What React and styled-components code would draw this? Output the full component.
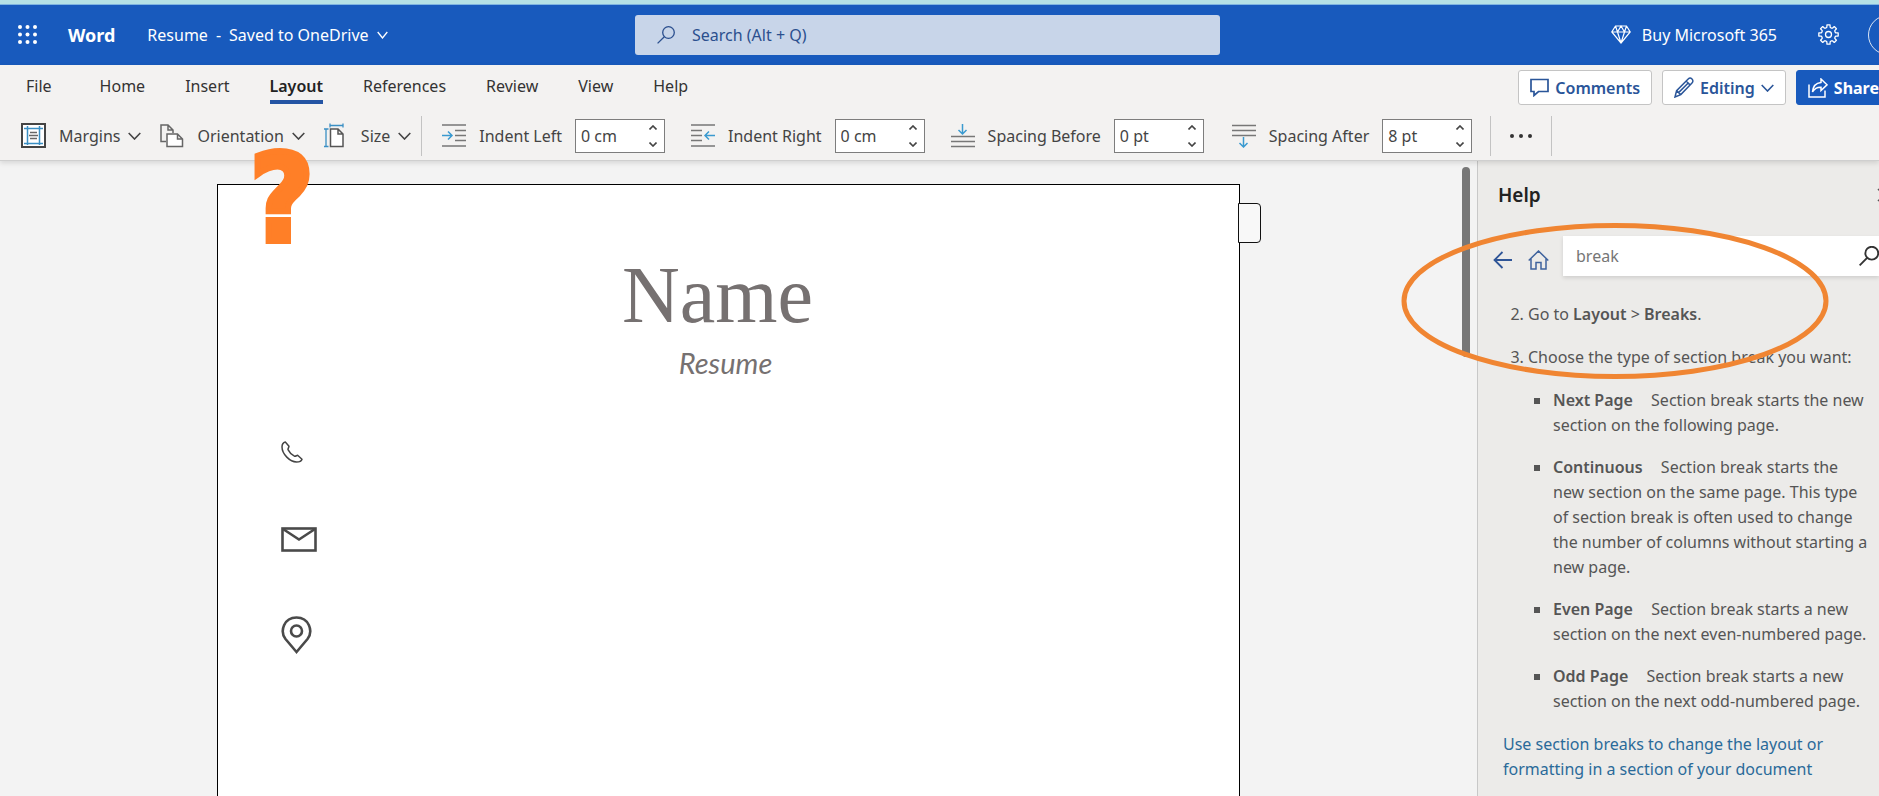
import React from "react";
import styled, { createGlobalStyle } from "styled-components";

const GlobalStyle = createGlobalStyle`
  * { box-sizing: border-box; }
  html, body { margin: 0; }
  body, button, input { font-family: "Noto Sans", "Open Sans", sans-serif; }
  button { background: none; border: 0; padding: 0; color: inherit; cursor: pointer; }
  svg { display: block; flex: none; }
`;

const Shell = styled.div`
  display: flex;
  flex-direction: column;
  height: 100vh;
  overflow: hidden;
  background: #f3f3f3;
  font-size: 16px;
  color: #444;
`;

/* ---- Title bar ---- */
const TitleBar = styled.header`
  flex: none;
  display: grid;
  grid-template-columns: minmax(0, 1fr) 585px 659px;
  align-items: center;
  height: 65px;
  border-top: 4px solid #b5e1e6;
  background: #185abd;
  box-shadow: inset 0 1px 0 #7fb4e0;
  color: #fff;
`;

const TitleLeft = styled.div`
  display: flex;
  align-items: center;
  padding-left: 18px;
  white-space: nowrap;
`;

const AppName = styled.span`
  margin-left: 30px;
  font-size: 18px;
  font-weight: 700;
`;

const DocName = styled.button`
  display: flex;
  align-items: center;
  gap: 8px;
  margin-left: 32px;
  font-size: 16px;
`;

const SearchBox = styled.label`
  display: flex;
  align-items: center;
  gap: 15px;
  height: 40px;
  padding-left: 22px;
  border-radius: 3px;
  background: #c8d5e9;
  color: #2b4f8e;
`;

const SearchInput = styled.input`
  flex: 1;
  min-width: 0;
  border: 0;
  outline: 0;
  background: none;
  font-size: 16px;
  color: inherit;
  &::placeholder { color: inherit; opacity: 1; }
`;

const TitleRight = styled.div`
  display: flex;
  align-items: center;
  justify-content: flex-end;
`;

const BuyButton = styled.button`
  display: flex;
  align-items: center;
  gap: 11px;
  font-size: 16px;
  white-space: nowrap;
`;

const IconButton = styled.button`
  display: flex;
  flex: none;
  margin-left: ${(p) => p.$gap || 0}px;
`;

const Avatar = styled.button`
  flex: none;
  width: 40px;
  height: 40px;
  margin: 0 -29px 0 29px;
  border: 1px solid #dbe6f6;
  border-radius: 50%;
`;

/* ---- Ribbon ---- */
const Ribbon = styled.div`
  flex: none;
  position: relative;
  z-index: 1;
  height: 96px;
  background: #f3f2f1;
  border-bottom: 1px solid #cfcfcf;
  box-shadow: 0 2px 5px rgba(0, 0, 0, 0.12);
`;

const TabRow = styled.div`
  display: flex;
  justify-content: space-between;
  height: 46px;
  overflow: hidden;
`;

const Tabs = styled.nav`
  display: flex;
  align-items: flex-start;
  gap: 40px;
  padding: 7px 0 0 26px;
`;

const Tab = styled.button`
  height: 32px;
  margin-right: ${(p) => (p.$wide ? 8 : 0)}px;
  border-bottom: 4px solid ${(p) => (p.$active ? "#2455a4" : "transparent")};
  font-size: 16px;
  font-weight: ${(p) => (p.$active ? 600 : 400)};
  line-height: 28px;
  color: ${(p) => (p.$active ? "#222" : "#333")};
`;

const Actions = styled.div`
  display: flex;
  gap: 10px;
  margin-right: -12px;
  padding-top: 5px;
`;

const ActionButton = styled.button`
  display: flex;
  align-items: center;
  gap: 6px;
  height: 35px;
  padding: 0 11px;
  border: 1px solid ${(p) => (p.$primary ? "#185abd" : "#c4c4c4")};
  border-radius: 3px;
  background: ${(p) => (p.$primary ? "#185abd" : "#fff")};
  font-size: 16px;
  font-weight: ${(p) => (p.$primary ? 700 : 600)};
  color: ${(p) => (p.$primary ? "#fff" : "#2a5599")};
`;

const Tools = styled.div`
  display: flex;
  align-items: center;
  height: 50px;
  padding: 0 0 1px 21px;
  font-size: 16px;
  white-space: nowrap;
`;

const ToolButton = styled.button`
  display: flex;
  align-items: center;
  gap: 8px;
  margin-right: ${(p) => p.$after}px;
  font-size: 16px;
  svg:first-child { margin-right: 5px; }
`;

const Divider = styled.span`
  width: 1px;
  height: 40px;
  margin-left: ${(p) => p.$before || 0}px;
  background: #c3c3c3;
`;

const Field = styled.label`
  display: flex;
  align-items: center;
  gap: 13px;
  margin-left: ${(p) => p.$before}px;
`;

const Spinner = styled.span`
  display: flex;
  width: 90px;
  height: 34px;
  border: 1px solid #7d7d7d;
  background: #fff;
`;

const SpinnerInput = styled.input`
  width: 73px;
  border: 0;
  outline: 0;
  padding: 0 0 0 5px;
  background: none;
  font-size: 16px;
  color: #444;
`;

const SpinnerArrows = styled.span`
  display: flex;
  flex-direction: column;
  justify-content: center;
  gap: 12px;
`;

const MoreButton = styled.button`
  display: flex;
  align-items: center;
  justify-content: center;
  width: 60px;
  height: 40px;
`;

/* ---- Document ---- */
const Body = styled.div`
  flex: 1;
  display: flex;
  min-height: 0;
`;

const Workspace = styled.main`
  flex: 1;
  display: flex;
  justify-content: center;
  min-width: 0;
  padding-top: 23px;
`;

const Sheet = styled.article`
  position: relative;
  width: 1023px;
  padding: 64px 0 0 62px;
  border: 1px solid #000;
  border-bottom: 0;
  background: #fff;
`;

const SideTab = styled.span`
  position: absolute;
  top: 18px;
  right: -22px;
  width: 23px;
  height: 40px;
  border: 1px solid #111;
  border-radius: 0 4px 4px 0;
  background: #f8f8f8;
`;

const Mark = styled.span`
  position: absolute;
  z-index: 2;
  top: -34px;
  left: 32px;
  font-family: "DejaVu Sans Condensed", "DejaVu Sans", sans-serif;
  font-size: 122px;
  font-weight: 700;
  line-height: 96px;
  color: #ff7f27;
  -webkit-text-stroke: 6px #ff7f27;
`;

const Name = styled.h1`
  margin: 0;
  padding-right: 84px;
  font-family: "Liberation Serif", serif;
  font-size: 80px;
  font-weight: 400;
  line-height: 92px;
  text-align: center;
  color: #767171;
`;

const Subtitle = styled.p`
  margin: 0;
  padding: 2px 68px 0 0;
  font-family: Lato, sans-serif;
  font-size: 29px;
  font-style: italic;
  line-height: 40px;
  text-align: center;
  color: #767171;
`;

const Contacts = styled.div`
  display: flex;
  flex-direction: column;
  align-items: flex-start;
  gap: 64px;
  padding: 58px 0 0 1px;
`;

const ScrollTrack = styled.div`
  flex: none;
  width: 20px;
  padding: 6px 7px 0 5px;
`;

const ScrollThumb = styled.div`
  height: 190px;
  border-radius: 4px;
  background: #777;
`;

/* ---- Help pane ---- */
const HelpPane = styled.aside`
  flex: none;
  position: relative;
  width: 402px;
  border-left: 1px solid #c8c8c8;
  background: #ecebe9;
  color: #555;
`;

const PaneHead = styled.div`
  display: flex;
  align-items: center;
  justify-content: space-between;
  height: 75px;
  margin-right: -12px;
  padding: 0 0 8px 20px;
`;

const PaneTitle = styled.h2`
  margin: 0;
  font-size: 19px;
  font-weight: 600;
  color: #222;
`;

const PaneNav = styled.div`
  display: flex;
  align-items: center;
  padding-left: 15px;
  > button { padding-top: 8px; }
`;

const PaneSearch = styled.label`
  flex: 1;
  display: flex;
  align-items: center;
  min-width: 0;
  height: 40px;
  margin-left: 14px;
  padding-left: 11px;
  background: #fff;
  box-shadow: 0 2px 4px rgba(0, 0, 0, 0.12);
  color: #333;
`;

const PaneInput = styled(SearchInput)`
  color: #767676;
`;

const Steps = styled.ol`
  margin: 0;
  padding: 26px 0 0 50px;
  font-size: 16px;
  line-height: 25px;
  white-space: nowrap;
  > li { margin-bottom: 18px; }
`;

const Kinds = styled.ul`
  margin: 18px 0 0;
  padding: 0 0 0 25px;
  list-style: none;
`;

const Kind = styled.li`
  position: relative;
  margin-bottom: 17px;
  b { margin-right: 14px; }
  &::before {
    content: "";
    position: absolute;
    top: 10px;
    left: -19px;
    width: 6px;
    height: 6px;
    background: #555;
  }
`;

const Bold = styled.b`
  font-weight: 600;
`;

const PaneLink = styled.a`
  display: block;
  padding-left: 25px;
  font-size: 16px;
  line-height: 25px;
  color: #2a6a99;
  text-decoration: none;
`;

const Ring = styled.svg`
  position: absolute;
  top: 61px;
  left: -77px;
  pointer-events: none;
`;

/* ---- Icons ---- */
const Icon = ({ w, h, stroke = "currentColor", sw = 1.5, children }) => (
  <svg width={w} height={h} viewBox={`0 0 ${w} ${h}`} fill="none" stroke={stroke} strokeWidth={sw} aria-hidden="true">
    {children}
  </svg>
);

const Chevron = ({ w = 13, sw = 1.6 }) => (
  <Icon w={w} h={8} sw={sw}><path d={`M0.7 1 L${w / 2} 7 L${w - 0.7} 1`} /></Icon>
);

const Waffle = () => (
  <svg width="20" height="20" viewBox="0 0 20 20" fill="#fff" aria-hidden="true">
    {[2, 9.5, 17].map((y) => [2, 9.5, 17].map((x) => <circle key={`${x}-${y}`} cx={x} cy={y} r="2" />))}
  </svg>
);

const Magnifier = ({ size = 18, sw = 1.3 }) => (
  <svg width={size} height={size} viewBox="0 0 18 18" fill="none" stroke="currentColor" strokeWidth={sw} aria-hidden="true">
    <circle cx="11.5" cy="6.5" r="5.8" /><path d="M7.3 10.7 L0.6 17.4" />
  </svg>
);

const Diamond = () => (
  <Icon w={20} h={19} sw={1.2}>
    <path d="M4.5 1 H15.5 L19.2 7 L10 18 L0.8 7 Z M0.8 7 H19.2 M6.5 7 L10 18 L13.5 7 L10 1 Z M4.5 1 L6.5 7 M15.5 1 L13.5 7" />
  </Icon>
);

const gearPath = Array.from({ length: 8 }, (_, i) => {
  const pt = (deg, r) => {
    const a = ((i * 45 + deg) * Math.PI) / 180;
    return `${(10.5 + r * Math.sin(a)).toFixed(2)} ${(10.5 - r * Math.cos(a)).toFixed(2)}`;
  };
  return `${i ? "L" : "M"}${pt(-13, 7.4)} L${pt(-9, 9.8)} L${pt(9, 9.8)} L${pt(13, 7.4)} L${pt(22.5, 7)}`;
}).join(" ") + " Z";

const Gear = () => (
  <Icon w={21} h={21} sw={1.3}><path d={gearPath} strokeLinejoin="round" /><circle cx="10.5" cy="10.5" r="3" /></Icon>
);

const CommentIcon = () => (
  <Icon w={19} h={19} sw={1.7}><path d="M1 1.5 H18 V13.5 H8.5 L4 17.5 V13.5 H1 Z" /></Icon>
);

const PencilIcon = () => (
  <Icon w={20} h={21} sw={1.5}>
    <path d="M1 20 L2.6 13.6 L14.2 2 C15.2 1 16.8 0.8 18 2 C19.2 3.2 19.2 4.8 18 6 L6.8 17.6 Z M2.6 13.6 L6.8 17.6 M12.2 4 L16.2 8 M4.6 15.6 L14.2 6" />
  </Icon>
);

const ShareIcon = () => (
  <Icon w={20} h={20} sw={1.5}>
    <path d="M1 6.5 V19 H17 V12.5" />
    <path d="M13 1 L19 6.8 L13 12.5 V9.2 C9 9 6.5 10.5 4.5 14 C5 8 8 4.8 13 4.4 Z" />
  </Icon>
);

const MarginsIcon = () => (
  <Icon w={25} h={25}>
    <rect x="1" y="1" width="23" height="23" stroke="#444" strokeWidth="2" fill="#fff" />
    <path d="M6.5 3 V22 M18.5 3 V22 M3 5.5 H22 M3 20.5 H22" stroke="#3a8fc4" />
    <path d="M9 9.5 H16 M8 12.5 H17 M9 15.5 H16" stroke="#666" strokeWidth="1.3" />
  </Icon>
);

const OrientationIcon = () => (
  <Icon w={24} h={24} stroke="#666">
    <path d="M6 17.5 H1 V1 H8 L13 6 V9 M8 1 V6 H13" />
    <path d="M7 10 H17.5 L22.5 15 V22.5 H7 Z M17.5 10 V15 H22.5" fill="#fff" />
  </Icon>
);

const SizeIcon = () => (
  <Icon w={24} h={25}>
    <path d="M6 2.5 H19 M6 0.5 V4.5 M19 0.5 V4.5 M2 6 V23.5 M0 6 H4.5 M0 23.5 H4.5" stroke="#3a8fc4" strokeWidth="1.3" />
    <path d="M6.5 6 H14 L19 11 V23.5 H6.5 Z M14 6 V11 H19" stroke="#555" fill="#fff" />
  </Icon>
);

const IndentLeftIcon = () => (
  <Icon w={24} h={23} stroke="#777">
    <path d="M0 1 H24 M13 6.5 H24 M13 11.5 H24 M13 16.5 H24 M0 22 H24" />
    <path d="M0 11.5 H10 M6 7.5 L10 11.5 L6 15.5" stroke="#3a9ad0" />
  </Icon>
);

const IndentRightIcon = () => (
  <Icon w={24} h={23} stroke="#777">
    <path d="M0 1 H24 M0 6.5 H11 M0 11.5 H11 M0 16.5 H11 M0 22 H24" />
    <path d="M24 11.5 H14 M18 7.5 L14 11.5 L18 15.5" stroke="#3a9ad0" />
  </Icon>
);

const SpacingBeforeIcon = () => (
  <Icon w={24} h={24} stroke="#777">
    <path d="M0 12.5 H24 M0 17.5 H24 M0 22.5 H24" strokeWidth="1.7" />
    <path d="M11.5 0 V10 M7.5 6 L11.5 10 L15.5 6" stroke="#3a9ad0" />
  </Icon>
);

const SpacingAfterIcon = () => (
  <Icon w={24} h={24} stroke="#777">
    <path d="M0 1.5 H24 M0 6.5 H24 M0 11.5 H24" strokeWidth="1.7" />
    <path d="M11.5 13 V23 M7.5 19 L11.5 23 L15.5 19" stroke="#3a9ad0" />
  </Icon>
);

const PhoneIcon = () => (
  <Icon w={22} h={22} stroke="#444">
    <path strokeLinejoin="round" d="M4.3 1 C3 1.3 1 3 1 6 C1 13 9 21 15.5 21 C18.5 21 20.6 19.5 21 18.2 L16.6 14.3 C15.4 14.6 14.8 15.4 13.4 15.2 C11 14 8.2 11 7 8.6 C7 7.2 7.8 6.8 8 5.2 Z" />
  </Icon>
);

const MailIcon = () => (
  <Icon w={36} h={25} stroke="#4a4a4a" sw={2.6}>
    <rect x="1.5" y="1.5" width="33" height="22" /><path d="M2 2 L18 12.5 L34 2" />
  </Icon>
);

const PinIcon = () => (
  <Icon w={31} h={38} stroke="#4a4a4a" sw={2.6}>
    <path d="M15.5 36 L4.5 23 C-1.5 15 3 1.5 15.5 1.5 C28 1.5 32.5 15 26.5 23 Z" /><circle cx="15.5" cy="15" r="5.5" />
  </Icon>
);

const fields = [
  { label: "Indent Left", value: "0 cm", icon: <IndentLeftIcon />, before: 20 },
  { label: "Indent Right", value: "0 cm", icon: <IndentRightIcon />, before: 26 },
  { label: "Spacing Before", value: "0 pt", icon: <SpacingBeforeIcon />, before: 26 },
  { label: "Spacing After", value: "8 pt", icon: <SpacingAfterIcon />, before: 28 },
];

const tabs = ["File", "Home", "Insert", "Layout", "References", "Review", "View", "Help"];

function SpinField({ label, value, icon, before }) {
  return (
    <Field $before={before}>
      {icon}
      {label}
      <Spinner>
        <SpinnerInput defaultValue={value} />
        <SpinnerArrows>
          <button aria-label={`Increase ${label}`}><Icon w={8} h={5} sw={1.6}><path d="M0.5 4.5 L4 1 L7.5 4.5" /></Icon></button>
          <button aria-label={`Decrease ${label}`}><Icon w={8} h={5} sw={1.6}><path d="M0.5 0.5 L4 4 L7.5 0.5" /></Icon></button>
        </SpinnerArrows>
      </Spinner>
    </Field>
  );
}

export default function App() {
  return (
    <Shell>
      <GlobalStyle />
      <TitleBar>
        <TitleLeft>
          <IconButton aria-label="App launcher"><Waffle /></IconButton>
          <AppName>Word</AppName>
          <DocName><span>Resume</span><span>-</span><span>Saved to OneDrive</span><Chevron w={11} sw={1.3} /></DocName>
        </TitleLeft>
        <SearchBox>
          <Magnifier />
          <SearchInput placeholder="Search (Alt + Q)" aria-label="Search" />
        </SearchBox>
        <TitleRight>
          <BuyButton><Diamond />Buy Microsoft 365</BuyButton>
          <IconButton $gap={41} aria-label="Settings"><Gear /></IconButton>
          <Avatar aria-label="Account" />
        </TitleRight>
      </TitleBar>

      <Ribbon>
        <TabRow>
          <Tabs>
            {tabs.map((t) => <Tab key={t} $active={t === "Layout"} $wide={t === "File"}>{t}</Tab>)}
          </Tabs>
          <Actions>
            <ActionButton><CommentIcon />Comments</ActionButton>
            <ActionButton><PencilIcon />Editing<Chevron /></ActionButton>
            <ActionButton $primary><ShareIcon />Share</ActionButton>
          </Actions>
        </TabRow>
        <Tools>
          <ToolButton $after={19}><MarginsIcon />Margins<Chevron /></ToolButton>
          <ToolButton $after={19}><OrientationIcon />Orientation<Chevron /></ToolButton>
          <ToolButton $after={10}><SizeIcon />Size<Chevron /></ToolButton>
          <Divider />
          {fields.map((f) => <SpinField key={f.label} {...f} />)}
          <Divider $before={18} />
          <MoreButton aria-label="More options">
            <svg width="22" height="4" viewBox="0 0 22 4" fill="#333"><circle cx="2" cy="2" r="2" /><circle cx="11" cy="2" r="2" /><circle cx="20" cy="2" r="2" /></svg>
          </MoreButton>
          <Divider />
        </Tools>
      </Ribbon>

      <Body>
        <Workspace>
          <Sheet>
            <Name>Name</Name>
            <Subtitle>Resume</Subtitle>
            <Contacts><PhoneIcon /><MailIcon /><PinIcon /></Contacts>
            <SideTab />
            <Mark>?</Mark>
          </Sheet>
        </Workspace>
        <ScrollTrack><ScrollThumb /></ScrollTrack>
        <HelpPane>
          <PaneHead>
            <PaneTitle>Help</PaneTitle>
            <IconButton aria-label="Close"><Icon w={14} h={14}><path d="M1 1 L13 13 M13 1 L1 13" /></Icon></IconButton>
          </PaneHead>
          <PaneNav>
            <IconButton aria-label="Back"><Icon w={19} h={18} stroke="#2f5597" sw={1.8}><path d="M19 9 H1.5 M9.5 1 L1.5 9 L9.5 17" /></Icon></IconButton>
            <IconButton $gap={16} aria-label="Home"><Icon w={21} h={20} stroke="#3f639d"><path d="M0.7 10.5 L10.5 1 L20.3 10.5 M3 8.5 V19 H8 V12.5 H13 V19 H18 V8.5" /></Icon></IconButton>
            <PaneSearch>
              <PaneInput defaultValue="break" aria-label="Search help" />
              <Magnifier size={20} sw={1.7} />
            </PaneSearch>
          </PaneNav>
          <Steps start={2}>
            <li>Go to <Bold>Layout</Bold> &gt; <Bold>Breaks</Bold>.</li>
            <li>
              Choose the type of section break you want:
              <Kinds>
                <Kind><Bold>Next Page</Bold> Section break starts the new<br />section on the following page.</Kind>
                <Kind><Bold>Continuous</Bold> Section break starts the<br />new section on the same page. This type<br />of section break is often used to change<br />the number of columns without starting a<br />new page.</Kind>
                <Kind><Bold>Even Page</Bold> Section break starts a new<br />section on the next even-numbered page.</Kind>
                <Kind><Bold>Odd Page</Bold> Section break starts a new<br />section on the next odd-numbered page.</Kind>
              </Kinds>
            </li>
          </Steps>
          <PaneLink href="#section-breaks">Use section breaks to change the layout or<br />formatting in a section of your document</PaneLink>
          <Ring width="428" height="158" viewBox="0 0 428 158" fill="none" stroke="#f08532" strokeWidth="5" aria-hidden="true">
            <ellipse cx="214" cy="79" rx="211" ry="75.5" />
          </Ring>
        </HelpPane>
      </Body>
    </Shell>
  );
}
